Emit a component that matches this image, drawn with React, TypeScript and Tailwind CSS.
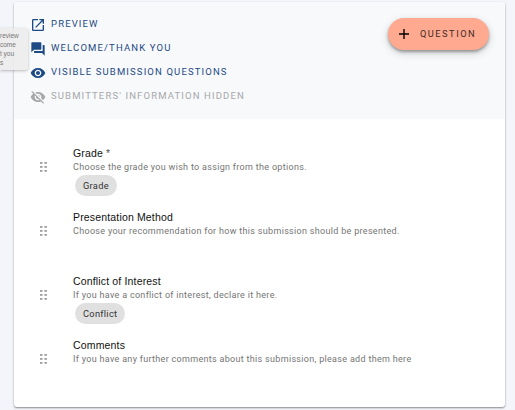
const HEADER_LINKS = [
  {
    label: 'PREVIEW',
    path: 'M14 3v2h3.59l-9.83 9.83 1.41 1.41L19 6.41V10h2V3h-7zm5 16H5V5h7V3H5a2 2 0 0 0-2 2v14a2 2 0 0 0 2 2h14a2 2 0 0 0 2-2v-7h-2v7z',
    style: 'text-[#1d4a85]',
  },
  {
    label: 'WELCOME/THANK YOU',
    path: 'M21 6h-2v9H6v2c0 .55.45 1 1 1h11l4 4V7c0-.55-.45-1-1-1zm-4 6V3c0-.55-.45-1-1-1H3c-.55 0-1 .45-1 1v14l4-4h10c.55 0 1-.45 1-1z',
    style: 'text-[#1d4a85]',
  },
  {
    label: 'VISIBLE SUBMISSION QUESTIONS',
    path: 'M12 4.5C7 4.5 2.73 7.61 1 12c1.73 4.39 6 7.5 11 7.5s9.27-3.11 11-7.5c-1.73-4.39-6-7.5-11-7.5zM12 17c-2.76 0-5-2.24-5-5s2.24-5 5-5 5 2.24 5 5-2.24 5-5 5zm0-8c-1.66 0-3 1.34-3 3s1.34 3 3 3 3-1.34 3-3-1.34-3-3-3z',
    style: 'text-[#1d4a85]',
  },
  {
    label: "SUBMITTERS' INFORMATION HIDDEN",
    path: 'M12 7c2.76 0 5 2.24 5 5 0 .65-.13 1.26-.36 1.83l2.92 2.92c1.51-1.26 2.7-2.89 3.43-4.75-1.73-4.39-6-7.5-11-7.5-1.4 0-2.74.25-3.98.7l2.16 2.16C10.74 7.13 11.35 7 12 7zM2 4.27l2.28 2.28.46.46C3.08 8.3 1.78 10.02 1 12c1.73 4.39 6 7.5 11 7.5 1.55 0 3.03-.3 4.38-.84l.42.42L19.73 22 21 20.73 3.27 3 2 4.27zM7.53 9.8l1.55 1.55c-.05.21-.08.43-.08.65 0 1.66 1.34 3 3 3 .22 0 .44-.03.65-.08l1.55 1.55c-.67.33-1.41.53-2.2.53-2.76 0-5-2.24-5-5 0-.79.2-1.53.53-2.2zm4.31-.78l3.15 3.15.02-.16c0-1.66-1.34-3-3-3l-.17.01z',
    style: 'text-[#a6a8aa]',
  },
];

const QUESTIONS = [
  { title: 'Grade', required: true, hint: 'Choose the grade you wish to assign from the options.', chip: 'Grade' },
  { title: 'Presentation Method', hint: 'Choose your recommendation for how this submission should be presented.' },
  { title: 'Conflict of Interest', hint: 'If you have a conflict of interest, declare it here.', chip: 'Conflict' },
  { title: 'Comments', hint: 'If you have any further comments about this submission, please add them here' },
];

function DragHandle() {
  return (
    <svg width="8" height="10" viewBox="0 0 8 10" className="mt-[16px] ml-[26px] shrink-0 fill-[#9d9d9d]">
      {[0, 4, 8].map((y) => (
        <g key={y}>
          <rect x="0" y={y} width="2.5" height="1.8" />
          <rect x="4.4" y={y} width="2.5" height="1.8" />
        </g>
      ))}
    </svg>
  );
}

export default function App() {
  return (
    <div className="relative h-[410px] w-[515px] overflow-hidden bg-[#f4f5fa] pt-[2px] pl-[14px] font-['Liberation_Sans',Arial,sans-serif]">
      <div className="h-[405px] w-[491px] overflow-hidden rounded-[3px] bg-white shadow-[0_1px_2px_rgba(0,0,0,0.45)]">
        <header className="flex h-[117px] items-start justify-between bg-[#f8f9fb] px-4 pt-[10px] font-[Roboto,sans-serif]">
          <ul>
            {HEADER_LINKS.map((link) => (
              <li key={link.label} className={`flex h-6 items-center text-[9.5px] ${link.style}`}>
                <svg viewBox="0 0 24 24" className="mt-[2px] mr-[5px] size-4 shrink-0 fill-current">
                  <path d={link.path} />
                </svg>
                <span className="tracking-[1.14px] whitespace-nowrap">{link.label}</span>
              </li>
            ))}
          </ul>
          <button className="mt-[6px] flex h-8 w-[101px] items-center rounded-full bg-[#ffa990] pl-[11px] text-[9.25px] tracking-[1.5px] text-[#3d2924] shadow-[0_2px_3px_rgba(0,0,0,0.3),0_3px_8px_rgba(0,0,0,0.18)]">
            <svg viewBox="0 0 10 10" className="mr-[11px] size-[10px] fill-black">
              <path d="M4.3 0h1.4v4.3H10v1.4H5.7V10H4.3V5.7H0V4.3h4.3z" />
            </svg>
            QUESTION
          </button>
        </header>
        <ul className="pt-[27px]">
          {QUESTIONS.map((q) => (
            <li key={q.title} className="flex h-16">
              <DragHandle />
              <div className="ml-[25px] whitespace-nowrap">
                <h3 className="text-[10.5px] leading-[14px] tracking-[0.16px] text-[#111]">
                  {q.title}
                  {q.required && <span className="text-[#555]"> *</span>}
                </h3>
                <p className="mt-px font-[Roboto,sans-serif] text-[9px] leading-[12px] tracking-[0.31px] text-[#757575]">{q.hint}</p>
                {q.chip && (
                  <span className="mt-[2px] ml-[2px] flex h-[21px] w-fit items-center rounded-full bg-[#e0e0e0] px-2 font-[Roboto,sans-serif] text-[9.25px] tracking-[0.3px] text-[#333]">
                    {q.chip}
                  </span>
                )}
              </div>
            </li>
          ))}
        </ul>
      </div>
      {/* drag preview, partly outside the window */}
      <div className="absolute top-[28px] left-0 h-[42px] w-[28px] rounded-r-[3px] bg-[#ececec]/90 pt-[3px] text-[6.5px] leading-[9px] text-[#777] shadow-[0_1px_3px_rgba(0,0,0,0.25)]">
        <p>review</p>
        <p>come</p>
        <p>t you</p>
        <p>s</p>
      </div>
    </div>
  );
}
